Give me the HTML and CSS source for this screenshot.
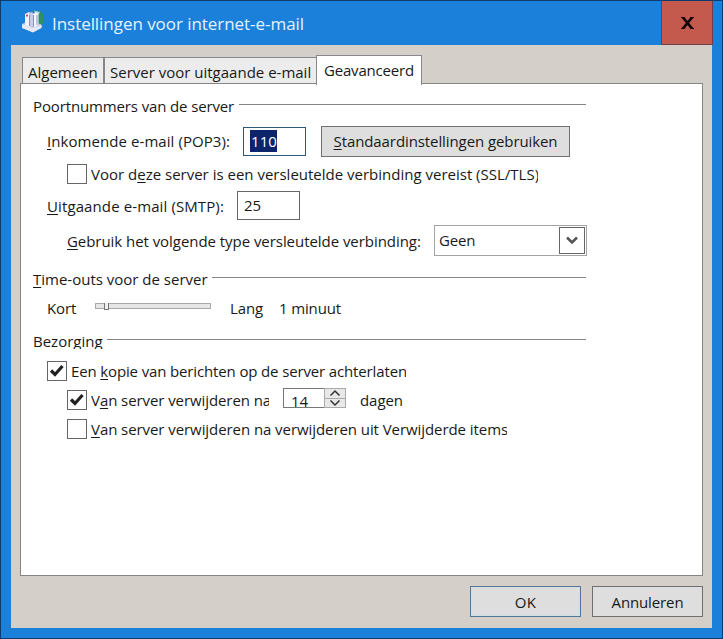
FILE: index.html
```html
<!DOCTYPE html>
<html lang="nl">
<head>
<meta charset="utf-8">
<title>Instellingen voor internet-e-mail</title>
<link rel="stylesheet" href="styles.css">
</head>
<body>
<div class="window">
  <header class="titlebar">
    <svg class="app-icon" width="24" height="24" viewBox="0 0 24 24">
      <circle cx="15" cy="9" r="8" fill="#2d7fae"/>
      <path d="M17 1.500q6 2 6 8l-1.500 5.500-4 2z" fill="#2f8f62"/>
      <path d="M13 1.500l6 1.500-1 2-4-1z" fill="#9fd6ea"/>
      <path d="M1 15l4-2 15 2 1 3-9 5-11-4z" fill="#b9c0dc"/>
      <path d="M1 15l11 4 8.500-3v3L12 23.500 1 19z" fill="#e6e9f5"/>
      <path d="M4 5l4-2 1 1v14l-5-2z" fill="#f4f5fc"/>
      <path d="M8 4l3-1 2 2v14l-5-2z" fill="#c6cce5"/>
      <path d="M12 5l3.500-2 2 2v11L12 19z" fill="#f6f7fd"/>
      <path d="M8.500 6v11M12.500 6v12M16 6v10" stroke="#8392bd" fill="none"/>
      <path d="M5 5.500h2v2H5z" fill="#c85070"/>
    </svg>
    <h1 class="title">Instellingen voor internet-e-mail</h1>
    <button class="close" aria-label="Sluiten"><svg width="13" height="12" viewBox="0 0 13 12"><path d="M0 .5h3.700M9.300 .5H13M0 11.500h3.700M9.300 11.500H13" stroke="#140808"/><path d="M2 .5l9 11M11 .5l-9 11" stroke="#140808" stroke-width="2.700"/></svg></button>
  </header>
  <main class="client">
    <nav class="tabs">
      <span class="tab tab-general">Algemeen</span>
      <span class="tab tab-outgoing">Server voor uitgaande e-mail</span>
      <span class="tab tab-active">Geavanceerd</span>
    </nav>
    <section class="panel">
      <div class="row group r-ports"><span class="t-ports">Poortnummers van de server</span><i class="rule"></i></div>
      <div class="row in1 r-pop"><span class="l-pop"><u>I</u>nkomende e-mail (POP3):</span><span class="field focused"><mark>110</mark></span><button class="btn defaults"><span><u>S</u>tandaardinstellingen gebruiken</span></button></div>
      <div class="row in2 r-ssl"><i class="check"></i><span class="clip l-ssl">Voor d<u>e</u>ze server is een versleutelde verbinding vereist (SSL/TLS)</span></div>
      <div class="row in1 r-smtp"><span class="l-smtp"><u>U</u>itgaande e-mail (SMTP):</span><span class="field">25</span></div>
      <div class="row in2 r-type"><span class="l-type"><u>G</u>ebruik het volgende type versleutelde verbinding:</span><span class="combo"><span class="choice">Geen</span><i class="drop"><svg width="14" height="11" viewBox="0 0 14 11"><path d="M2 2.500l5 5 5-5" fill="none" stroke="#555" stroke-width="2.600"/></svg></i></span></div>
      <div class="row group r-timeouts"><span class="t-timeouts"><u>T</u>ime-outs voor de server</span><i class="rule"></i></div>
      <div class="row in1 r-slider"><span class="l-short">Kort</span><span class="slider"><i class="thumb"></i></span><span class="l-long">Lang</span><span class="l-min">1 minuut</span></div>
      <div class="row group r-delivery"><span class="t-delivery">Bezorging</span><i class="rule"></i></div>
      <div class="row in1 r-copy"><i class="check"><svg width="16" height="16" viewBox="0 0 16 16"><path d="M2 7.500l4 4L13.500 3" fill="none" stroke="#222" stroke-width="3.200"/></svg></i><span class="clip l-copy">Een <u>k</u>opie van berichten op de server achterlaten</span></div>
      <div class="row in2 r-days"><i class="check"><svg width="16" height="16" viewBox="0 0 16 16"><path d="M2 7.500l4 4L13.500 3" fill="none" stroke="#222" stroke-width="3.200"/></svg></i><span class="clip l-after">V<u>a</u>n server verwijderen na</span><span class="spin"><span class="spin-value">14</span><span class="arrows"><i><svg width="12" height="8" viewBox="0 0 12 8"><path d="M1.500 6.500L6 2l4.500 4.500" fill="none" stroke="#333" stroke-width="1.500"/></svg></i><i><svg width="12" height="8" viewBox="0 0 12 8"><path d="M1.500 1.500L6 6l4.500-4.500" fill="none" stroke="#333" stroke-width="1.500"/></svg></i></span></span><span class="l-days">dagen</span></div>
      <div class="row in2 r-deleted"><i class="check"></i><span class="clip l-deleted"><u>V</u>an server verwijderen na verwijderen uit Verwijderde items</span></div>
    </section>
    <footer class="actions"><button class="btn ok">OK</button><button class="btn cancel">Annuleren</button></footer>
  </main>
</div>
</body>
</html>
```
FILE: styles.css
```css
* { box-sizing: border-box; }
body {
  margin: 0;
  font: 15px/20px "Open Sans", "Noto Sans", sans-serif;
  color: #191919;
}
i { font-style: normal; }
svg { display: block; }
u { text-decoration-thickness: 1px; text-underline-offset: 2px; text-decoration-skip-ink: none; }
button { font: inherit; color: inherit; padding: 0; border-radius: 0; }

.window {
  width: 723px;
  height: 639px;
  border: 1px solid #0d3c6c;
  background: #1a80d9;
  padding: 0 10px 10px;
  display: flex;
  flex-direction: column;
}
.titlebar { height: 44px; flex: none; display: flex; align-items: center; padding-left: 10px; }
.app-icon { flex: none; margin-bottom: 4px; }
.title { margin: 0 0 0 7px; font-size: 17px; font-weight: 400; letter-spacing: -0.05px; color: #e4f2ff; flex: 1; padding-top: 1px; }
.close {
  width: 52px;
  height: 44px;
  margin-right: -1px;
  align-self: flex-start;
  border: 1px solid #6f3d4d;
  border-top: 0;
  background: #c4594e;
  display: flex;
  align-items: center;
  justify-content: center;
}
.client { flex: 1; background: #d4d0c9; padding: 10px 9px 0; min-height: 0; display: flex; flex-direction: column; }

.tabs { height: 28px; flex: none; display: flex; align-items: flex-end; padding-left: 2px; }
.tab { height: 26px; border: 1px solid #85878a; border-bottom: 0; background: #ececec; padding: 4px 0 0 5px; white-space: nowrap; }
.tab-general { width: 82px; }
.tab-outgoing { width: 213px; }
.tab-active { width: 106px; height: 30px; margin: 0 0 -2px -1px; background: #fff; padding: 4px 0 0 7px; letter-spacing: -0.18px; position: relative; }

.panel { height: 493px; flex: none; border: 1px solid #858585; background: #fff; padding: 10px 0 0 12px; }
.row { display: flex; align-items: center; white-space: nowrap; width: 554px; }
.in1 { padding-left: 14px; }
.in2 { padding-left: 34px; }
.rule { flex: 1; height: 1px; background: #858585; margin: 0 1px 4px 0; }
.r-ports { height: 26px; }
.r-ports .rule { margin-bottom: 6px; }
.r-pop { height: 42px; }
.r-ssl { height: 24px; }
.r-smtp { height: 39px; }
.r-type { height: 31px; }
.r-timeouts { height: 24px; margin-top: 11px; }
.r-slider { height: 35px; }
.r-delivery { height: 30px; }
.r-copy { height: 30px; }
.r-days { height: 28px; }
.r-deleted { height: 30px; }

.t-ports { width: 206px; letter-spacing: -0.13px; padding-bottom: 2px; }
.t-timeouts { width: 179px; }
.t-delivery { width: 74px; height: 18px; overflow: hidden; line-height: 20px; margin-bottom: 3px; }
.r-delivery .rule { margin-bottom: 3px; }

.l-pop { width: 196px; letter-spacing: 0.07px; }
.l-smtp { width: 190px; letter-spacing: 0.11px; }
.l-type { width: 367px; letter-spacing: -0.05px; }
.field { width: 63px; height: 29px; border: 1px solid #666; padding: 3px 0 0 6px; }
.field.focused { border-color: #2f5878; padding-top: 2px; }
.field mark { display: inline-block; background: #0b246a; color: #fff; height: 22px; line-height: 22px; padding: 0 0 0 1px; letter-spacing: 0.1px; }
.btn { border: 1px solid #707070; background: #dedede; text-align: center; }
.defaults { width: 249px; height: 31px; margin-left: 15px; letter-spacing: -0.09px; }

.check { width: 20px; height: 20px; border: 1px solid #666; margin-right: 4px; flex: none; display: flex; align-items: center; justify-content: center; }
.clip { overflow: hidden; }
.l-ssl { width: 447px; }
.l-copy { width: 335px; letter-spacing: -0.14px; }
.l-after { width: 178px; letter-spacing: -0.08px; }
.l-deleted { width: 416px; letter-spacing: -0.07px; }

.combo { width: 153px; height: 31px; border: 1px solid #a2a4a6; padding: 0 1px 0 4px; display: flex; align-items: center; justify-content: space-between; letter-spacing: -0.2px; }
.choice { padding-bottom: 2px; }
.drop { width: 26px; height: 27px; border: 1px solid #666; display: flex; align-items: center; justify-content: center; }

.r-slider > span:not(.slider) { padding-bottom: 2px; }
.l-short { width: 48px; letter-spacing: -0.15px; }
.slider { width: 116px; height: 6px; border: 1px solid #a7aaa7; background: #e6e6e6; margin: 0 19px 5px 0; padding-left: 8px; }
.thumb { display: block; width: 5px; height: 7px; margin-top: -1px; border: solid #777; border-width: 0 1px 1px; background: #eee; }
.l-long { width: 49px; letter-spacing: -0.13px; }
.l-min { letter-spacing: -0.14px; }

.spin { width: 63px; height: 20px; margin: 0 14px 4px 14px; border: 1px solid #777; display: flex; }
.spin-value { flex: 1; padding-left: 7px; line-height: 24px; height: 18px; overflow: hidden; }
.arrows { width: 22px; margin: -1px; border: 1px solid #aaa; background: #e8e8e8; display: flex; flex-direction: column; }
.arrows i { flex: 1; display: flex; align-items: center; justify-content: center; }
.arrows i + i { border-top: 1px solid #aaa; }
.l-days { letter-spacing: -0.06px; padding-bottom: 1px; }

.actions { display: flex; justify-content: flex-end; gap: 11px; padding-top: 10px; }
.actions .btn { width: 111px; height: 31px; }
.ok { border-color: #55779a; box-shadow: inset 0 0 0 1px #d3dde2; letter-spacing: 0.4px; }
.cancel { letter-spacing: -0.12px; }
```
